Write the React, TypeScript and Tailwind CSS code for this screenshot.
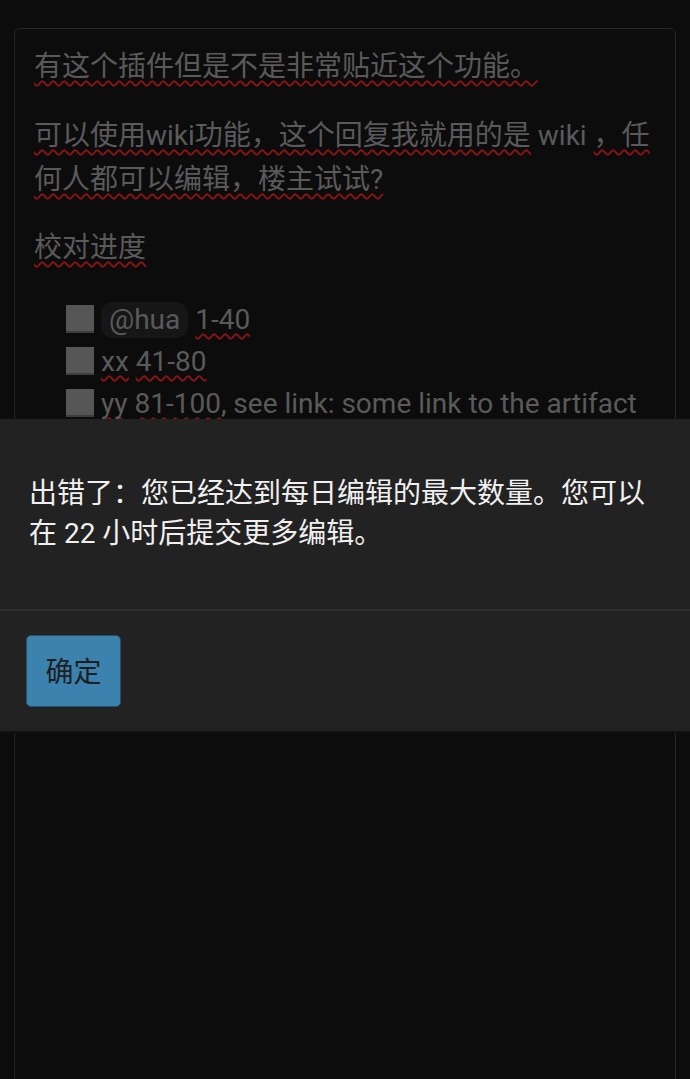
import React from 'react';

const FONT = { fontFamily: 'Roboto, "Noto Sans CJK SC", sans-serif' };

// red squiggle the spellchecker puts under words
const Squiggle = ({ children }: { children: React.ReactNode }) => (
  <span className="underline decoration-wavy decoration-[#8a1414] decoration-[1.5px] underline-offset-[4px] [text-decoration-skip-ink:none]">
    {children}
  </span>
);

const Box = () => <span className="inline-block w-[28px] h-[28px] bg-[#565656] border-b-2 border-[#3e3e3e] align-[-4px] mr-[7px]" />;

export default function App() {
  return (
    <div className="relative h-[1079px] overflow-hidden bg-[#0c0c0c]" style={FONT}>
      {/* editor */}
      <div className="pt-[28px] px-[14px]">
        <div className="h-[1120px] rounded-md border-[1.5px] border-[#262626] bg-[#0c0c0c] px-[19px] pt-[16px] text-[28px] leading-[44px] text-[#5a5a5a]">
          <p>
            <Squiggle>有这个插件但是不是非常贴近这个功能。</Squiggle>
          </p>
          <p className="mt-[25px]">
            <Squiggle>可以使用wiki功能，这个回复我就用的是</Squiggle> wiki <Squiggle>，任何人都可以编辑，楼主试试?</Squiggle>
          </p>
          <p className="mt-[24px]">
            <Squiggle>校对进度</Squiggle>
          </p>
          <ul className="mt-[29px] pl-[32px] leading-[42px]">
            <li>
              <Box />
              <span className="inline-block rounded-[12px] bg-[#161616] px-[8px] leading-[36px]">@hua</span>{' '}
              <Squiggle>1-40</Squiggle>
            </li>
            <li>
              <Box />
              <Squiggle>xx</Squiggle> <Squiggle>41-80</Squiggle>
            </li>
            <li>
              <Box />
              <Squiggle>yy</Squiggle> <Squiggle>81-100</Squiggle>, see link: some link to the artifact
            </li>
          </ul>
        </div>
      </div>

      {/* error dialog */}
      <div className="absolute left-0 right-0 top-[419px] bg-[#222222] border-b-2 border-[#111111]">
        <div className="px-[29px] pt-[55px] pb-[55px] text-[28px] leading-[40px] text-[#f0f0f0]">
          出错了：您已经达到每日编辑的最大数量。您可以在 22 小时后提交更多编辑。
        </div>
        <div className="border-t-2 border-[#2c2c2c] px-[26px] pt-[24px] pb-[24px]">
          <button className="flex h-[72px] w-[95px] items-center justify-center rounded-[5px] border border-[#24506e] bg-[#3c82ae] pt-[4px] text-[28px] text-[#1f1f1f]">
            确定
          </button>
        </div>
      </div>
    </div>
  );
}
